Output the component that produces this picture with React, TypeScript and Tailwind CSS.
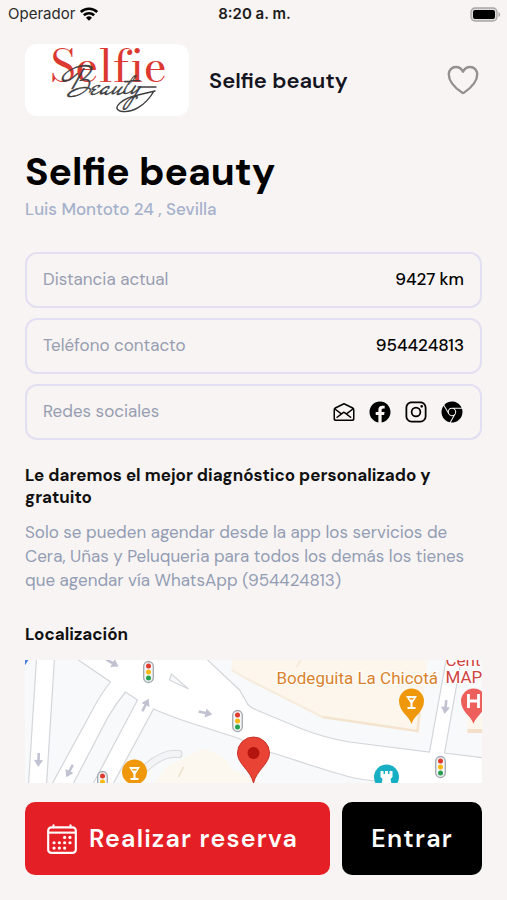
import type { ReactNode } from "react";
import {
  IoCalendarOutline,
  IoHeartOutline,
  IoLogoChrome,
  IoLogoFacebook,
  IoLogoInstagram,
  IoMailOpenOutline,
} from "react-icons/io5";

function StatusBar() {
  return (
    <div className="grid h-7 grid-cols-3 items-center pr-1.5 pl-2 font-['Inter',sans-serif] text-[15px] text-[#2c2b2b]">
      <div className="flex items-center gap-1">
        <span>Operador</span>
        <svg viewBox="0 0 20 15" className="h-3.5 w-5" fill="none" stroke="#000" strokeWidth="2.8" aria-hidden="true">
          <path d="M1.2 5.4a12.6 12.6 0 0 1 17.6 0" />
          <path d="M4.5 8.9a8 8 0 0 1 11 0" />
          <path d="M10 14.6 6.8 11.4a4.7 4.7 0 0 1 6.4 0Z" fill="#000" stroke="none" />
        </svg>
      </div>
      <span className="text-center font-semibold whitespace-nowrap text-[#1c1b1b]">8:20 a. m.</span>
      <svg viewBox="0 0 31 15" className="h-[15px] w-[31px] justify-self-end" aria-hidden="true">
        <rect x="1" y="1" width="26" height="13" rx="4" fill="#dedbda" stroke="#aaa7a6" strokeWidth="1.3" />
        <rect x="3" y="3" width="22" height="9" rx="2" fill="#000" />
        <path d="M28.5 5c2.200.7 2.200 4.300 0 5Z" fill="#aaa7a6" />
      </svg>
    </div>
  );
}

function Logo() {
  return (
    <svg viewBox="0 0 164 72" className="h-[72px] w-[164px] shrink-0 rounded-xl bg-white" role="img" aria-label="Selfie Beauty">
      <text
        x="25"
        y="38"
        fontSize="44"
        fill="#dc3a31"
        fontFamily="'Bodoni Moda', 'Old Standard TT', 'Liberation Serif', serif"
        className="[font-variant-ligatures:none]"
      >
        Selfie
      </text>
      <text
        x="39"
        y="50"
        fontSize="38"
        fill="#3d3d3f"
        stroke="#3d3d3f"
        strokeWidth="0.4"
        fontFamily="'Mr De Haviland', 'Sacramento', 'Great Vibes', 'Liberation Serif', serif"
      >
        Beauty
      </text>
      <g fill="none" stroke="#3d3d3f" strokeWidth="1.4" strokeLinecap="round">
        <path d="M113 43h18M129 47c-8 14-22 23-34 20-9-3 3-13 18-16l17-4" />
      </g>
    </svg>
  );
}

function InfoRow({ label, children }: { label: string; children: ReactNode }) {
  return (
    <div className="flex h-14 items-center justify-between rounded-xl border-2 border-[#e2dff2] px-4">
      <dt className="text-[#979eb1]">{label}</dt>
      <dd className="font-medium text-black">{children}</dd>
    </div>
  );
}

const socials = [
  { name: "Correo", Icon: IoMailOpenOutline },
  { name: "Facebook", Icon: IoLogoFacebook },
  { name: "Instagram", Icon: IoLogoInstagram },
  { name: "Sitio web", Icon: IoLogoChrome },
];

function TrafficLight({ x, y }: { x: number; y: number }) {
  return (
    <g transform={`translate(${x} ${y})`}>
      <rect x="-4.800" y="-10.500" width="9.600" height="21" rx="4.800" fill="#f4f5f6" stroke="#a2a8ae" strokeWidth="1.300" />
      <circle cy="-6" r="2.500" fill="#df3b30" />
      <circle r="2.500" fill="#f6b912" />
      <circle cy="6" r="2.500" fill="#28a052" />
    </g>
  );
}

function RoadArrow({ x, y, angle }: { x: number; y: number; angle: number }) {
  return (
    <path
      d="M-7-1.300H0V-4.500L7 0 0 4.500V1.300H-7Z"
      fill="#c0c2d2"
      transform={`translate(${x} ${y}) rotate(${angle})`}
    />
  );
}

function Pin({ x, y, color }: { x: number; y: number; color: string }) {
  return (
    <path
      d="M0 23C-2 15-12.500 11-12.500 0a12.500 12.500 0 0 1 25 0C12.500 11 2 15 0 23Z"
      fill={color}
      transform={`translate(${x} ${y})`}
    />
  );
}

function Cocktail({ x, y }: { x: number; y: number }) {
  return (
    <path
      d="M-5.500-6h11L1 1v4h3v2h-8V5h3V1ZM-2.500-4l1 1.500h3l1-1.500Z"
      fill="#fff"
      fillRule="evenodd"
      transform={`translate(${x} ${y})`}
    />
  );
}

function StreetMap() {
  return (
    <svg
      viewBox="0 0 458 123"
      preserveAspectRatio="xMidYMid slice"
      className="h-[123px] w-full bg-white"
      role="img"
      aria-label="Mapa de la localización"
    >
      <g fill="#f8f9fa" stroke="#d3d6da" strokeWidth="1.200">
        <path d="M-2-2H12L4 125H-2Z" />
        <path d="M30-2 22 125H27L68 50Q75 36 86 22L51-2Z" />
        <path d="M101 32 113 40 68 125H48L83 58Q91 44 101 32Z" />
        <path d="M129 49 88 125H353L350 121Q330 119 315 114C290 107 265 98 245 92L213 78 182 68Q152 59 129 49Z" />
        <path d="M181-2 215 30 222 42Q224 47 232 50L275 68Q300 78 325 82L405 92 422-2Z" />
        <path d="M437-2 420 93 460 98V-2Z" />
        <path d="M147 14 145 20 164 29Z" />
      </g>
      <path d="M207-1V10L225 20 298 57 395 72 403-1Z" fill="#fdf6ed" />
      <path d="M207 10 225 20 298 57M272 7 277-1" fill="none" stroke="#f7ebdb" strokeWidth="2" />
      <path d="M298 57 393 71 395 52" fill="none" stroke="#f3e4ce" strokeWidth="2.500" />
      <path d="M443 71V56H458V71Z" fill="#fdf6ed" />
      <path d="M443 71H458" stroke="#f3e0ca" strokeWidth="4" />
      <path d="M130 123 142 107 177 89Q201 93 207 108L236 123Z" fill="#fdf8ef" />
      <path d="M154 117 159 107" stroke="#eadfcc" strokeWidth="1.500" />
      <path d="M118 111Q137 92 154 94" fill="none" stroke="#d8dadd" strokeWidth="8" strokeLinecap="round" />
      <path d="M118 111Q137 92 154 94" fill="none" stroke="#f3f4f5" strokeWidth="6" strokeLinecap="round" />
      <path d="M0 0H4L0 6Z" fill="#4a80e0" />

      <RoadArrow x={88} y={3} angle={30} />
      <RoadArrow x={121} y={45} angle={-63} />
      <RoadArrow x={181} y={53} angle={12} />
      <RoadArrow x={14} y={100} angle={92} />
      <RoadArrow x={45} y={111} angle={118} />
      <RoadArrow x={421} y={47} angle={97} />

      <TrafficLight x={124} y={12} />
      <TrafficLight x={213} y={61} />
      <TrafficLight x={78} y={122} />
      <TrafficLight x={416} y={107} />

      <circle cx="110" cy="112" r="12.500" fill="#ef980c" />
      <Cocktail x={110} y={113} />
      <Pin x={387} y={41} color="#ef980c" />
      <Cocktail x={387} y={42} />
      <Pin x={449} y={41} color="#ec5f5a" />
      <path d="M444 34V48M454 34V48M444 41H454" stroke="#fff" strokeWidth="2.800" />
      <circle cx="362" cy="117" r="12.500" fill="#17afc3" />
      <path d="M356 111V117L358 119 357 124H367L366 119 368 117V111H365V114H363.500V111H360.500V114H359V111Z" fill="#fff" />
      <path
        d="M229 123C226 110 213 104 213 93a16 16 0 0 1 32 0C245 104 232 110 229 123Z"
        fill="#e94335"
        stroke="#c9332a"
        strokeWidth="1"
      />
      <circle cx="229" cy="93" r="6" fill="#b3140d" />

      <g fontFamily="Roboto, sans-serif" fontSize="17" stroke="#fff" strokeWidth="2" paintOrder="stroke">
        <text x="252" y="24" fill="#d9822b">Bodeguita La Chicotá</text>
        <text x="421" y="6" fill="#d0453f">Cent</text>
        <text x="421" y="23" fill="#d0453f">MAP</text>
      </g>
    </svg>
  );
}

export default function App() {
  return (
    <div className="flex min-h-screen flex-col bg-[#f8f4f3] font-['DM_Sans','Inter',sans-serif]">
      <StatusBar />

      <header className="flex items-center gap-5 px-[25px] pt-4">
        <Logo />
        <span className="flex-1 text-[22px] font-semibold text-[#151522]">Selfie beauty</span>
        <button type="button" aria-label="Añadir a favoritos" className="text-[#929090]">
          <IoHeartOutline className="size-[38px]" />
        </button>
      </header>

      <main className="px-[25px] pt-8 text-[17px]">
        <h1 className="text-[39px] leading-12 font-bold text-black">Selfie beauty</h1>
        <p className="leading-[26px] font-medium text-[#a5b1cb]">Luis Montoto 24 , Sevilla</p>

        <dl className="mt-[30px] flex flex-col gap-2.5">
          <InfoRow label="Distancia actual">9427 km</InfoRow>
          <InfoRow label="Teléfono contacto">954424813</InfoRow>
          <InfoRow label="Redes sociales">
            <span className="flex items-center gap-3">
              {socials.map(({ name, Icon }) => (
                <a key={name} href="#" aria-label={name}>
                  <Icon className="size-6" />
                </a>
              ))}
            </span>
          </InfoRow>
        </dl>

        <h2 className="mt-6 leading-[22px] font-bold text-[#111]">
          Le daremos el mejor diagnóstico personalizado y gratuito
        </h2>
        <p className="mt-3 leading-6 text-[#929db4]">
          Solo se pueden agendar desde la app los servicios de Cera, Uñas y Peluqueria para todos los demás los tienes
          que agendar vía WhatsApp (954424813)
        </p>

        <h2 className="mt-[31px] mb-[15px] leading-[22px] font-bold text-[#111]">Localización</h2>
        <StreetMap />
      </main>

      <footer className="mt-auto flex gap-3 px-[25px] pt-[19px] pb-[25px] text-[25px] font-semibold tracking-wider text-white">
        <button type="button" className="flex h-[73px] grow items-center gap-2.5 rounded-[10px] bg-[#e51f26] px-5">
          <IoCalendarOutline className="size-[34px] shrink-0" />
          Realizar reserva
        </button>
        <button type="button" className="h-[73px] rounded-[10px] bg-black px-[29px]">
          Entrar
        </button>
      </footer>
    </div>
  );
}
